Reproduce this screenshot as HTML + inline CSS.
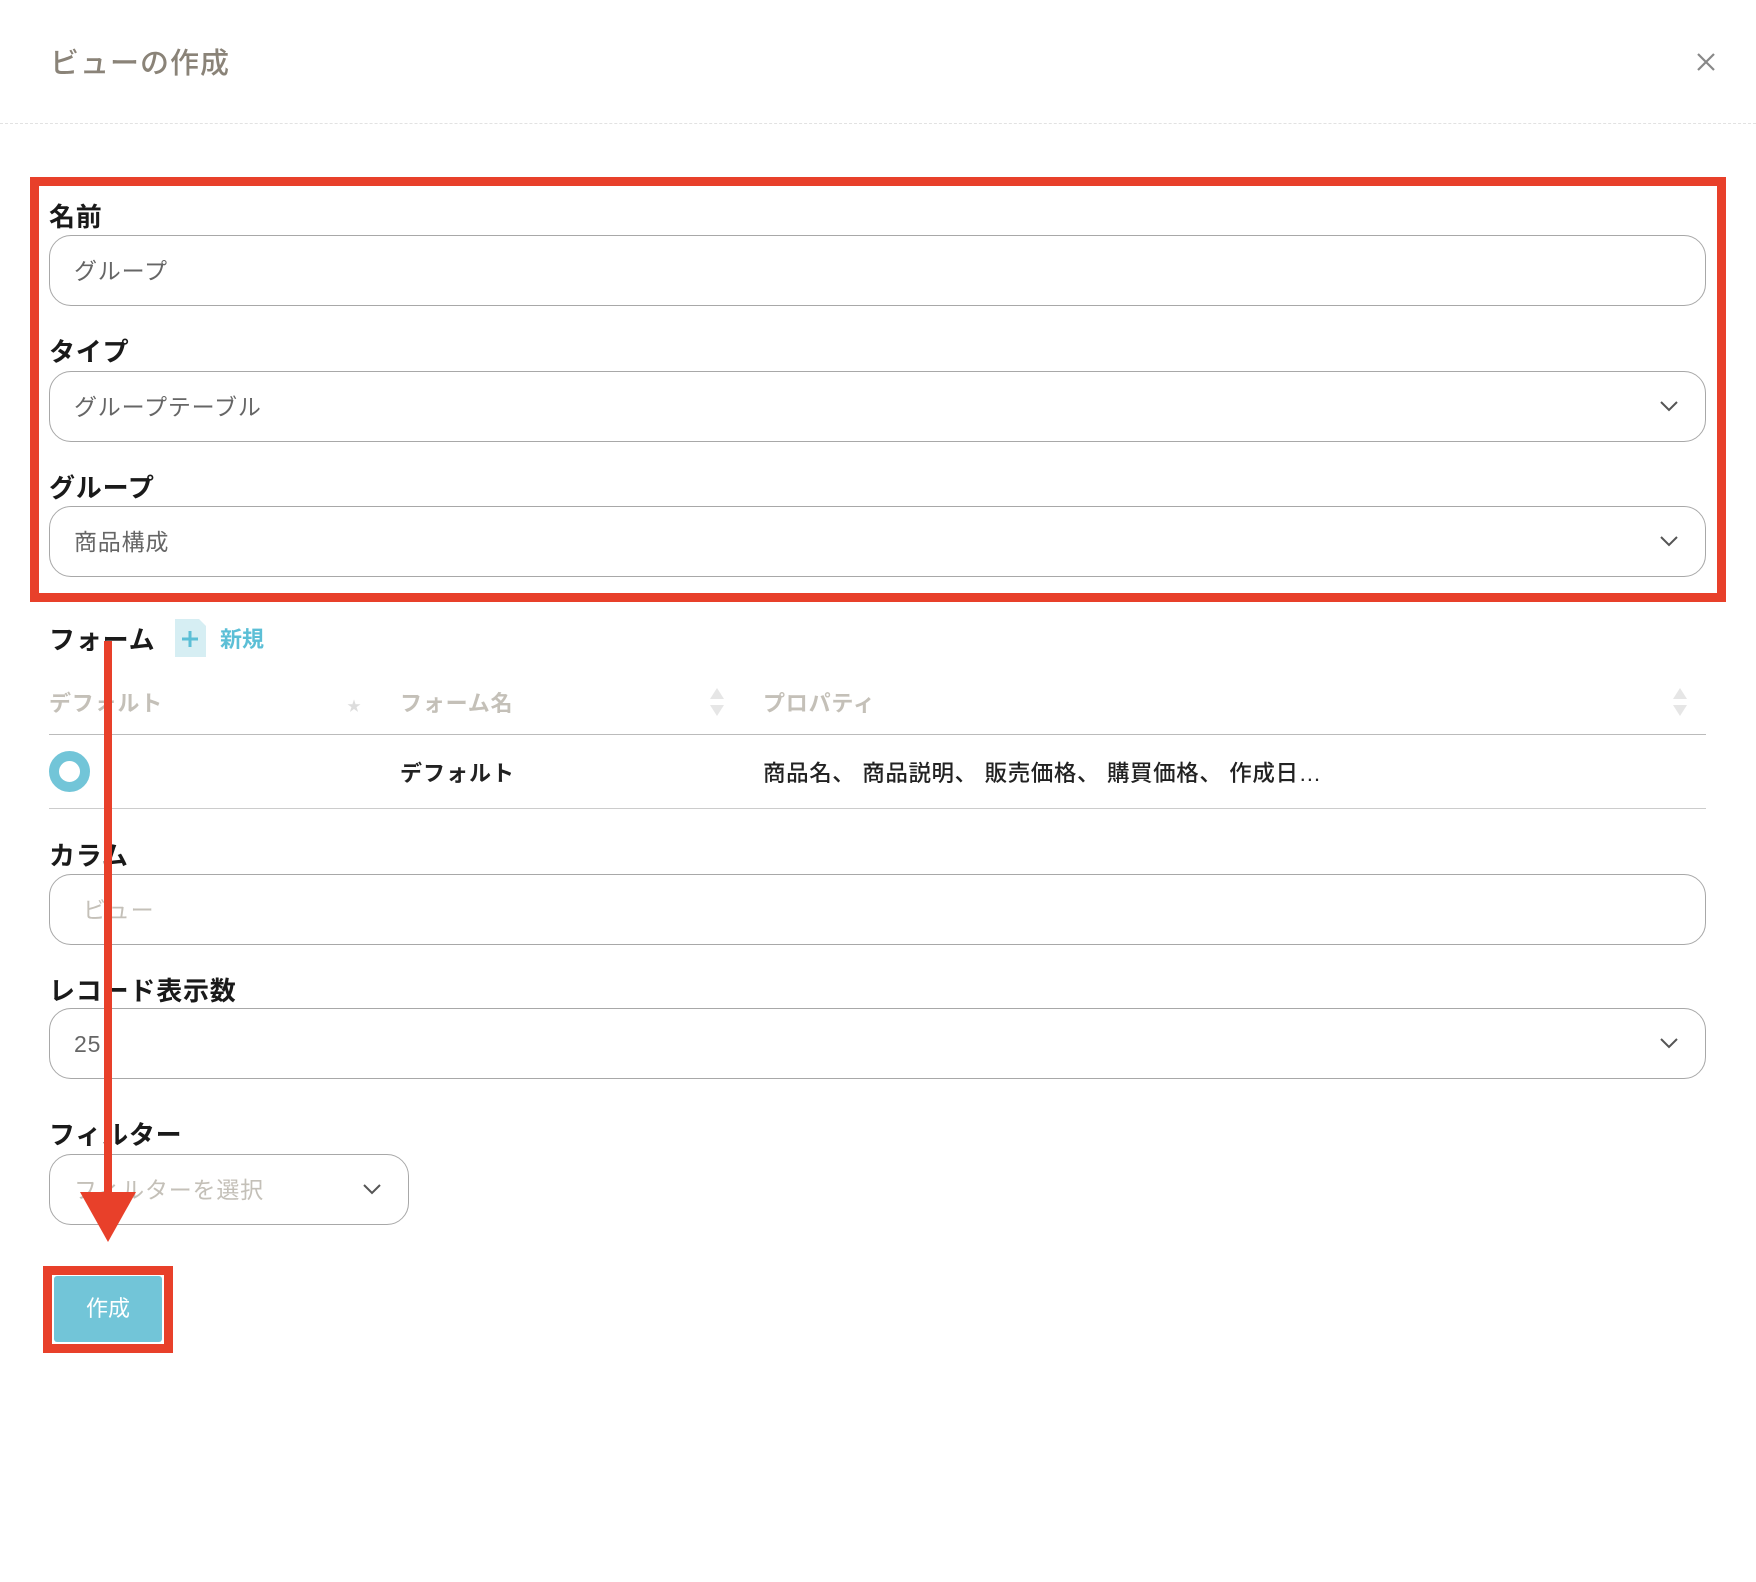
<!DOCTYPE html>
<html><head><meta charset="utf-8"><style>
*{box-sizing:border-box;margin:0;padding:0}
body{width:1756px;height:1582px;background:#fff;font-family:"Liberation Sans","Noto Sans CJK JP",sans-serif;position:relative;overflow:hidden;color:#222}
.a{position:absolute}
.title{left:50px;top:40px;font-size:29px;color:#8a8378;font-weight:500;letter-spacing:1px}
.lbl{position:absolute;left:49px;font-size:26px;font-weight:700;color:#1a1a1a;letter-spacing:0.8px}
.inp{position:absolute;left:49px;width:1657px;height:71px;border:1.5px solid #a8a8a8;border-radius:22px;font-size:23px;color:#666;padding-left:24px;line-height:70px;letter-spacing:0.8px}
.chev{position:absolute;right:26px;top:27px}
.hd{position:absolute;top:686px;font-size:22px;font-weight:700;color:#c4c0b8;letter-spacing:0.8px}
</style></head><body>
<div class="a title">ビューの作成</div>
<svg class="a" style="left:1696px;top:52px" width="20" height="20"><path d="M2 2L18 18M18 2L2 18" stroke="#888" stroke-width="2.2"/></svg>
<div class="a" style="left:0;top:123px;width:1756px;border-top:1px dashed #e2e2e2"></div>

<div class="lbl" style="top:197px">名前</div>
<div class="inp" style="top:235px">グループ</div>
<div class="lbl" style="top:332px">タイプ</div>
<div class="inp" style="top:371px">グループテーブル<svg class="chev" width="20" height="14"><path d="M2 3L10 11L18 3" fill="none" stroke="#555" stroke-width="2"/></svg></div>
<div class="lbl" style="top:468px">グループ</div>
<div class="inp" style="top:506px">商品構成<svg class="chev" width="20" height="14"><path d="M2 3L10 11L18 3" fill="none" stroke="#555" stroke-width="2"/></svg></div>
<div class="a" style="left:30px;top:177px;width:1696px;height:425px;border:9px solid #e8402a"></div>

<div class="lbl" style="top:620px">フォーム</div>
<svg class="a" style="left:175px;top:619px" width="32" height="38"><path d="M0 0H24L31 7V38H0Z" fill="#d6eef3"/><path d="M15 12V28M7 20H23" stroke="#5cbfd6" stroke-width="3"/></svg>
<div class="a" style="left:220px;top:622px;font-size:22px;font-weight:700;color:#5cbfd6">新規</div>

<div class="hd" style="left:49px">デフォルト</div>
<div class="a" style="left:347px;top:696px;font-size:14px;color:#ddd">★</div>
<div class="hd" style="left:400px">フォーム名</div>
<svg class="a" style="left:709px;top:688px" width="16" height="28"><path d="M8 0L15 11H1Z M8 28L15 17H1Z" fill="#e6e6e6"/></svg>
<div class="hd" style="left:763px">プロパティ</div>
<svg class="a" style="left:1672px;top:688px" width="16" height="28"><path d="M8 0L15 11H1Z M8 28L15 17H1Z" fill="#e6e6e6"/></svg>
<div class="a" style="left:49px;top:734px;width:1657px;border-top:1.5px solid #bbb"></div>
<div class="a" style="left:49px;top:751px;width:41px;height:41px;border-radius:50%;border:10px solid #72c5d8"></div>
<div class="a" style="left:400px;top:756px;font-size:22px;font-weight:700;letter-spacing:1px">デフォルト</div>
<div class="a" style="left:763px;top:756px;font-size:22.5px;font-weight:500;letter-spacing:0.6px">商品名、 商品説明、 販売価格、 購買価格、 作成日…</div>
<div class="a" style="left:49px;top:808px;width:1657px;border-top:1.5px solid #ccc"></div>

<div class="lbl" style="top:836px">カラム</div>
<div class="inp" style="top:874px;color:#c4c0b8;padding-left:33px">ビュー</div>
<div class="lbl" style="top:971px">レコード表示数</div>
<div class="inp" style="top:1008px">25<svg class="chev" width="20" height="14"><path d="M2 3L10 11L18 3" fill="none" stroke="#555" stroke-width="2"/></svg></div>
<div class="lbl" style="top:1115px">フィルター</div>
<div class="inp" style="top:1154px;width:360px;color:#c4c0b8">フィルターを選択<svg class="chev" width="20" height="14"><path d="M2 3L10 11L18 3" fill="none" stroke="#555" stroke-width="2"/></svg></div>

<div class="a" style="left:43px;top:1266px;width:130px;height:87px;border:9px solid #e8402a"></div>
<div class="a" style="left:54px;top:1276px;width:108px;height:66px;background:#72c5d8;border-radius:3px;color:#fff;font-size:22px;text-align:center;line-height:66px">作成</div>

<div class="a" style="left:104px;top:641px;width:8px;height:556px;background:#e8402a"></div>
<svg class="a" style="left:80px;top:1192px" width="56" height="50"><path d="M0 0H56L28 50Z" fill="#e8402a"/></svg>
</body></html>
